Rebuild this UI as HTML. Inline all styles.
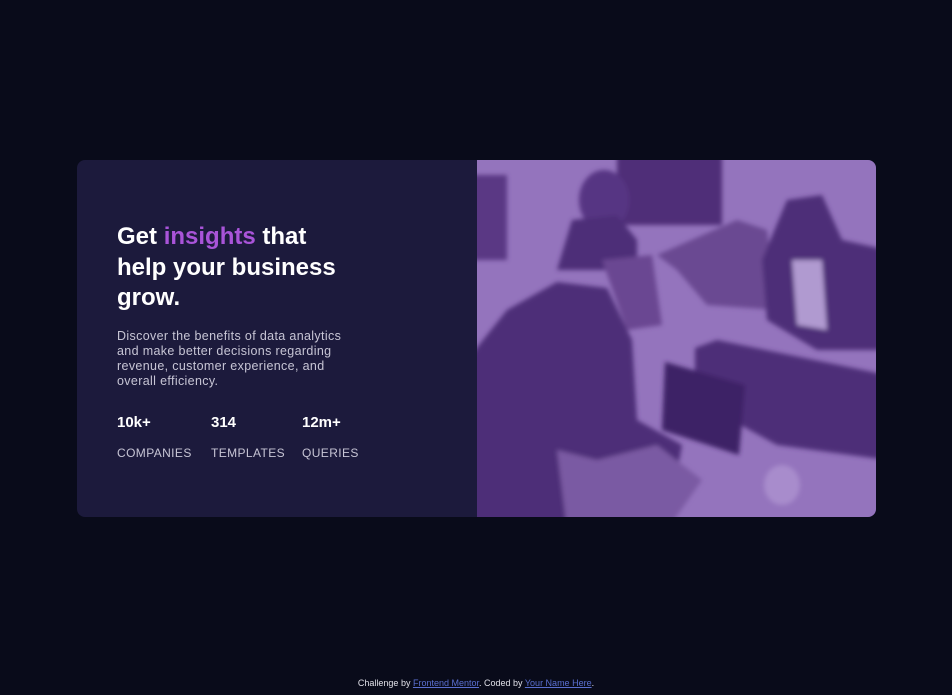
<!DOCTYPE html>
<html><head><meta charset="utf-8"><style>
html,body{margin:0;padding:0}
body{width:952px;height:695px;background:#090b1a;position:relative;font-family:"Liberation Sans",sans-serif;overflow:hidden}
.card{position:absolute;left:77px;top:160px;width:799px;height:357px;background:#1c1a3c;border-radius:8px;overflow:hidden}
.txt{position:absolute;left:40px;top:62px;width:240px}
h1{margin:0;color:#fff;font-size:24px;line-height:30.5px;font-weight:700;letter-spacing:0px;width:230px}
h1 span{color:#a954d9}
p{margin:15px 0 0;color:#c7c5d5;font-size:12.5px;line-height:15.3px;letter-spacing:0.35px;width:235px}
.stats{position:absolute;left:40px;top:254px;color:#fff}
.s{position:absolute;top:0;white-space:nowrap}
.n{font-size:15px;font-weight:700}
.l{font-size:12px;color:#c7c5d5;margin-top:15px;letter-spacing:0.4px}
.img{position:absolute;left:400px;top:0;width:399px;height:357px}
.foot{position:absolute;top:678px;left:0;width:952px;text-align:center;font-size:9px;color:#e0e0e8}
.foot a{color:#5a6fd0;text-decoration:underline}
</style></head><body>
<div class="card">
 <div class="txt">
  <h1>Get <span>insights</span> that help your business grow.</h1>
  <p>Discover the benefits of data analytics and make better decisions regarding revenue, customer experience, and overall efficiency.</p>
 </div>
 <div class="stats">
  <div class="s" style="left:0"><div class="n">10k+</div><div class="l">COMPANIES</div></div>
  <div class="s" style="left:94px"><div class="n">314</div><div class="l">TEMPLATES</div></div>
  <div class="s" style="left:185px"><div class="n">12m+</div><div class="l">QUERIES</div></div>
 </div>
 <svg class="img" viewBox="0 0 399 357" preserveAspectRatio="none">
  <defs><filter id="b" x="-20%" y="-20%" width="140%" height="140%"><feGaussianBlur stdDeviation="2.5"/></filter></defs>
  <rect width="399" height="357" fill="#9474bd"/>
  <g filter="url(#b)">
  <rect x="140" y="-10" width="105" height="75" fill="#4f2e78"/>
  <rect x="-10" y="15" width="40" height="85" fill="#5a3884"/>
  <polygon points="180,95 260,60 290,70 300,150 230,145 200,110" fill="#6a4892"/>
  <ellipse cx="127" cy="40" rx="25" ry="30" fill="#573583"/>
  <polygon points="80,110 95,60 140,55 160,80 160,110" fill="#4e2d78"/>
  <polygon points="285,100 310,40 345,35 365,80 410,90 410,190 340,190 290,160" fill="#4e2d78"/>
  <polygon points="315,100 345,100 350,170 320,165" fill="#b09ad0"/>
  <polygon points="218,188 240,180 410,215 410,300 300,285 218,240" fill="#4e2d78"/>
  <polygon points="-10,230 -10,200 30,150 80,122 130,128 155,180 160,260 205,285 190,370 -10,370" fill="#4e2d78"/>
  <polygon points="80,290 120,300 180,285 225,320 190,370 90,370" fill="#7a5aa3"/>
  <polygon points="188,202 268,225 262,295 185,270" fill="#3e2266"/>
  <polygon points="125,100 175,95 185,165 150,170" fill="#6a4792"/>
  <ellipse cx="305" cy="325" rx="18" ry="20" fill="#a88ccc"/>
  </g>
 </svg>
</div>
<div class="foot">Challenge by <a>Frontend Mentor</a>. Coded by <a>Your Name Here</a>.</div>
</body></html>
